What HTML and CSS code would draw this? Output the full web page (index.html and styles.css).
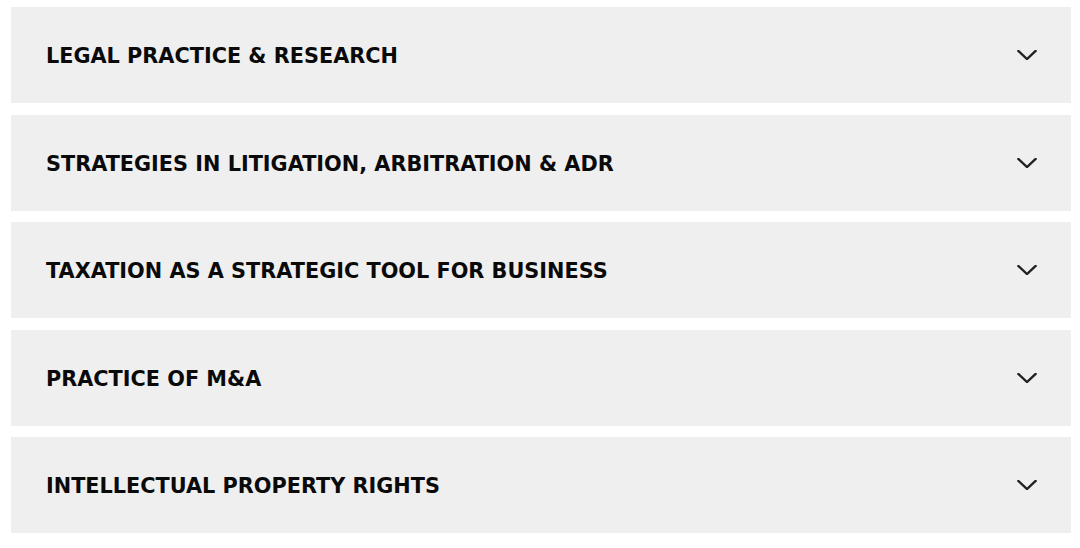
FILE: index.html
```html
<!DOCTYPE html>
<html lang="en">
<head>
<meta charset="utf-8">
<title>Accordion</title>
<link rel="stylesheet" href="styles.css">
</head>
<body>
<div class="accordion">
  <div class="item"><span class="title">LEGAL PRACTICE &amp; RESEARCH</span><svg class="chev" viewBox="0 0 20 10" width="20" height="10"><polyline points="1.5,1 10,9 18.5,1"/></svg></div>
  <div class="item"><span class="title">STRATEGIES IN LITIGATION, ARBITRATION &amp; ADR</span><svg class="chev" viewBox="0 0 20 10" width="20" height="10"><polyline points="1.5,1 10,9 18.5,1"/></svg></div>
  <div class="item"><span class="title">TAXATION AS A STRATEGIC TOOL FOR BUSINESS</span><svg class="chev" viewBox="0 0 20 10" width="20" height="10"><polyline points="1.5,1 10,9 18.5,1"/></svg></div>
  <div class="item"><span class="title">PRACTICE OF M&amp;A</span><svg class="chev" viewBox="0 0 20 10" width="20" height="10"><polyline points="1.5,1 10,9 18.5,1"/></svg></div>
  <div class="item"><span class="title">INTELLECTUAL PROPERTY RIGHTS</span><svg class="chev" viewBox="0 0 20 10" width="20" height="10"><polyline points="1.5,1 10,9 18.5,1"/></svg></div>
</div>
</body>
</html>
```
FILE: styles.css
```css
html, body {
  margin: 0;
  padding: 0;
  background: #ffffff;
}
.accordion {
  display: flex;
  flex-direction: column;
  gap: 11.5px;
  padding: 7px 9px 0 11px;
}
.item {
  height: 96px;
  background: #efefef;
  display: flex;
  align-items: center;
  justify-content: space-between;
  padding: 0 34px 0 35px;
}
.title {
  font-family: "DejaVu Sans", sans-serif;
  font-weight: 700;
  font-size: 20.8px;
  color: #0a0a0a;
  letter-spacing: 0;
  padding-top: 2px;
}
.chev {
  fill: none;
  stroke: #222222;
  stroke-width: 2.4;
  stroke-linecap: square;
}
```
